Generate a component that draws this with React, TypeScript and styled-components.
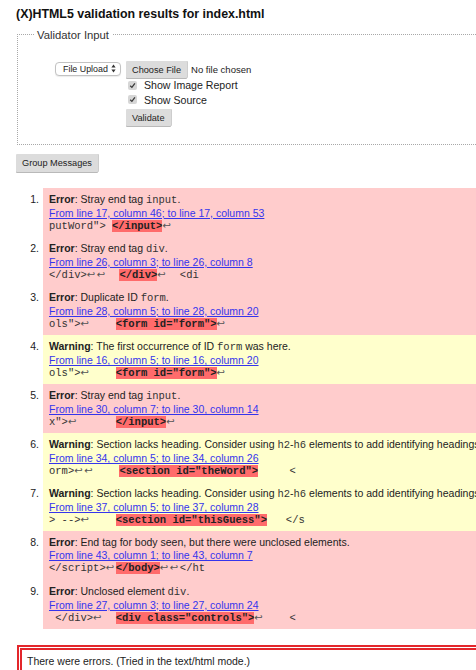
import React from "react";
import styled, { createGlobalStyle } from "styled-components";

const Global = createGlobalStyle`
  html, body { margin: 0; padding: 0; overflow: hidden; background: #fff; }
  body {
    font-family: "Liberation Sans", Arial, Helvetica, sans-serif;
    font-size: 10.5px;
    color: #222;
  }
`;

const Page = styled.div`
  width: 620px;
  padding: 0 0 0 16px;
`;

const Title = styled.h2`
  margin: 7px 0 5px;
  font-size: 12.4px;
  line-height: 14px;
  font-weight: bold;
  color: #111;
  white-space: nowrap;
`;

const Fieldset = styled.fieldset`
  margin: 0 0 0 1px;
  padding: 19px 0 18px 16px;
  border: 1px dotted #a8a8a8;
  min-width: 0;
`;

const Legend = styled.legend`
  padding: 3px 3px 0;
  font-size: 11.3px;
  line-height: 13px;
  color: #333;
`;

const InputArea = styled.div`
  display: flex;
  align-items: flex-start;
  gap: 5px;
  margin-left: 21px;
`;

const SelectBox = styled.span`
  display: inline-flex;
  align-items: center;
  justify-content: space-between;
  box-sizing: border-box;
  width: 66px;
  height: 14px;
  margin-top: 0.5px;
  padding: 0 4px 0 7px;
  border: 1px solid #c2c2c2;
  border-radius: 4px;
  background: #fff;
  box-shadow: 0 1px 1px rgba(0, 0, 0, 0.08);
  font-size: 8.9px;
  color: #222;
`;

const Controls = styled.div`
  display: flex;
  flex-direction: column;
  align-items: flex-start;
`;

const FileRow = styled.div`
  display: flex;
  align-items: center;
  gap: 4px;
  height: 17px;
`;

const Button = styled.button<{ $h?: number }>`
  display: inline-flex;
  align-items: center;
  justify-content: center;
  height: ${(p) => p.$h ?? 17}px;
  padding: 0 6px;
  border: none;
  border-radius: 1px;
  background: #dcdcdc;
  box-shadow: 0 1px 0 #b9b9b9, 1px 0 0 #cdcdcd;
  font-family: "Liberation Sans", Arial, sans-serif;
  font-size: 9.2px;
  color: #222;
  cursor: pointer;
`;

const NoFile = styled.span`
  font-size: 9.5px;
  color: #222;
`;

const CheckRow = styled.label`
  display: flex;
  align-items: center;
  height: 14.5px;
  font-size: 10.6px;
  color: #222;
`;

const Check = styled.span`
  display: inline-flex;
  align-items: center;
  justify-content: center;
  width: 9px;
  height: 9px;
  margin: 0 7px 0 2px;
  border-radius: 2px;
  background: #d6d6d6;
`;

const ValidateWrap = styled.div`
  margin-top: 2px;
`;

const GroupWrap = styled.div`
  margin-top: 9px;
`;

const List = styled.ol`
  margin: 16px 0 0;
  padding: 0;
  list-style: none;
`;

const Item = styled.li`
  display: flex;
`;

const Num = styled.span`
  flex: none;
  box-sizing: border-box;
  width: 27px;
  padding: 5px 4px 0 0;
  text-align: right;
  line-height: 13px;
  color: #222;
`;

const Body = styled.div<{ $kind: "error" | "warning" }>`
  flex: 1;
  padding: 5px 0 4.15px 6px;
  background: ${(p) => (p.$kind === "error" ? "#ffcccc" : "#ffffcc")};
`;

const Line = styled.div`
  line-height: 13px;
  white-space: nowrap;
`;

const Code = styled.code`
  font-family: "Liberation Mono", "Courier New", monospace;
  font-size: 10.5px;
  color: #333;
`;

const Link = styled.a`
  color: #3535ec;
  text-decoration: underline;
`;

const Extract = styled.div`
  line-height: 13px;
  white-space: pre;
  font-family: "Liberation Mono", "Courier New", monospace;
  font-size: 10.5px;
  color: #333;
`;

const Hl = styled.span`
  background: #ff6b6b;
  font-weight: bold;
  color: #222;
`;

const Ret = styled.span`
  display: inline-block;
  width: 10px;
  font-family: "DejaVu Sans", sans-serif;
  font-size: 10px;
  line-height: 10px;
  color: #555;
`;

const ErrorBox = styled.div`
  margin: 16.5px 0 0 1px;
  padding: 4.5px 5px;
  border: 5px double #e3262b;
  line-height: 13px;
  white-space: nowrap;
  color: #222;
`;

const Arrows = () => (
  <svg width="5" height="9" viewBox="0 0 5 9">
    <path d="M2.5 0.5 L4.6 3.6 L0.4 3.6 Z" fill="#333" />
    <path d="M2.5 8.5 L4.6 5.4 L0.4 5.4 Z" fill="#333" />
  </svg>
);

const Tick = () => (
  <svg width="7" height="7" viewBox="0 0 7 7">
    <path d="M1.2 3.8 L2.9 5.4 L5.9 1.4" fill="none" stroke="#3a3a3a" strokeWidth="1.3" />
  </svg>
);

type Entry = {
  kind: "error" | "warning";
  msg: React.ReactNode;
  link: string;
  before: string;
  hl: string;
  after: string;
};

const withReturns = (s: string, key: string) =>
  s.split("\u21A9").flatMap((part, i) =>
    i === 0 ? [part] : [<Ret key={`${key}-${i}`}>{"\u21A9"}</Ret>, part]
  );

const entries: Entry[] = [
  {
    kind: "error",
    msg: <>Stray end tag <Code>input</Code>.</>,
    link: "From line 17, column 46; to line 17, column 53",
    before: 'putWord"> ',
    hl: "</input>",
    after: "\u21A9",
  },
  {
    kind: "error",
    msg: <>Stray end tag <Code>div</Code>.</>,
    link: "From line 26, column 3; to line 26, column 8",
    before: "</div>\u21A9\u21A9  ",
    hl: "</div>",
    after: "\u21A9  <di",
  },
  {
    kind: "error",
    msg: <>Duplicate ID <Code>form</Code>.</>,
    link: "From line 28, column 5; to line 28, column 20",
    before: 'ols">\u21A9    ',
    hl: '<form id="form">',
    after: "\u21A9",
  },
  {
    kind: "warning",
    msg: <>The first occurrence of ID <Code>form</Code> was here.</>,
    link: "From line 16, column 5; to line 16, column 20",
    before: 'ols">\u21A9    ',
    hl: '<form id="form">',
    after: "\u21A9",
  },
  {
    kind: "error",
    msg: <>Stray end tag <Code>input</Code>.</>,
    link: "From line 30, column 7; to line 30, column 14",
    before: 'x">\u21A9      ',
    hl: "</input>",
    after: "\u21A9",
  },
  {
    kind: "warning",
    msg: (
      <>
        Section lacks heading. Consider using <Code>h2</Code>-<Code>h6</Code> elements to add
        identifying headings to all sections.
      </>
    ),
    link: "From line 34, column 5; to line 34, column 26",
    before: "orm>\u21A9\u21A9    ",
    hl: '<section id="theWord">',
    after: "     <",
  },
  {
    kind: "warning",
    msg: (
      <>
        Section lacks heading. Consider using <Code>h2</Code>-<Code>h6</Code> elements to add
        identifying headings to all sections.
      </>
    ),
    link: "From line 37, column 5; to line 37, column 28",
    before: "> -->\u21A9    ",
    hl: '<section id="thisGuess">',
    after: "   </s",
  },
  {
    kind: "error",
    msg: <>End tag for body seen, but there were unclosed elements.</>,
    link: "From line 43, column 1; to line 43, column 7",
    before: "</script>\u21A9",
    hl: "</body>",
    after: "\u21A9\u21A9</ht",
  },
  {
    kind: "error",
    msg: <>Unclosed element <Code>div</Code>.</>,
    link: "From line 27, column 3; to line 27, column 24",
    before: " </div>\u21A9  ",
    hl: '<div class="controls">',
    after: "\u21A9    <",
  },
];

export default function App() {
  return (
    <>
      <Global />
      <Page>
        <Title>(X)HTML5 validation results for index.html</Title>
        <Fieldset>
          <Legend>Validator Input</Legend>
          <InputArea>
            <SelectBox>
              File Upload
              <Arrows />
            </SelectBox>
            <Controls>
              <FileRow>
                <Button type="button">Choose File</Button>
                <NoFile>No file chosen</NoFile>
              </FileRow>
              <CheckRow>
                <Check>
                  <Tick />
                </Check>
                Show Image Report
              </CheckRow>
              <CheckRow>
                <Check>
                  <Tick />
                </Check>
                Show Source
              </CheckRow>
              <ValidateWrap>
                <Button type="button">Validate</Button>
              </ValidateWrap>
            </Controls>
          </InputArea>
        </Fieldset>
        <GroupWrap>
          <Button type="button" $h={17.5}>Group Messages</Button>
        </GroupWrap>
        <List>
          {entries.map((e, i) => (
            <Item key={i}>
              <Num>{i + 1}.</Num>
              <Body $kind={e.kind}>
                <Line>
                  <strong>{e.kind === "error" ? "Error" : "Warning"}</strong>: {e.msg}
                </Line>
                <Line>
                  <Link href="#">{e.link}</Link>
                </Line>
                <Extract>
                  {withReturns(e.before, `b${i}`)}
                  <Hl>{e.hl}</Hl>
                  {withReturns(e.after, `a${i}`)}
                </Extract>
              </Body>
            </Item>
          ))}
        </List>
        <ErrorBox>There were errors. (Tried in the text/html mode.)</ErrorBox>
      </Page>
    </>
  );
}
